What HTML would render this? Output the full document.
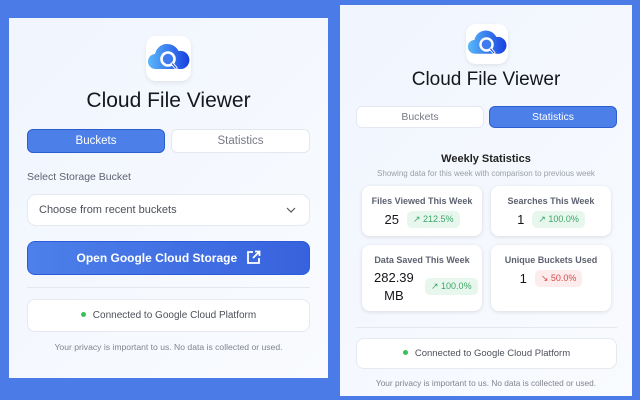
<!DOCTYPE html>
<html><head><style>
*{box-sizing:border-box;margin:0;padding:0}
body{width:640px;height:400px;background:#4a7be6;font-family:"Liberation Sans",sans-serif;position:relative;overflow:hidden}
.panel{position:absolute;background:linear-gradient(135deg,#f0f5fe,#f9fbfe);}
.abs{position:absolute}
.icon{position:absolute;background:#fff;border-radius:10px;box-shadow:0 2px 5px rgba(0,0,0,.08)}
.title{position:absolute;left:0;right:0;text-align:center;color:#15171c}
.tab{position:absolute;border-radius:6px;text-align:center;font-size:11.5px}
.on{background:#4c7fe8;color:#fff;border:1px solid #2b5fd0}
.off{background:#fff;color:#777b85;border:1px solid #e4e8ef}
.box{position:absolute;background:#fff;border:1px solid #e6e9ef;border-radius:8px}
.card{position:absolute;background:#fff;border-radius:8px;box-shadow:0 1px 4px rgba(0,0,0,.12);text-align:center}
.card .h{font-size:9px;font-weight:bold;color:#5d6270;margin-top:10px}
.badge{display:inline-block;font-size:9px;padding:3px 6px;border-radius:5px;vertical-align:middle}
.g{background:#e8f7ee;color:#3ba566}.r{background:#fdecec;color:#d74b4b}
.num{font-size:13px;color:#15171c;vertical-align:middle;margin-right:8px}
.dot{display:inline-block;width:5px;height:5px;border-radius:50%;background:#3cbf5a;margin-right:7px;vertical-align:middle;position:relative;top:-1px}
</style></head><body>
<svg width="0" height="0" style="position:absolute"><defs>
<linearGradient id="cg" x1="0" x2="1"><stop offset="0" stop-color="#5ab8fa"/><stop offset="1" stop-color="#1840e0"/></linearGradient>
<symbol id="logo" viewBox="0 0 45 45"><path d="M10 33a7.5 7.5 0 0 1-1-15 12.5 12.5 0 0 1 23.5-3 9 9 0 0 1 3.5 18z" fill="url(#cg)"/><circle cx="22" cy="23" r="6.5" fill="#3f7bf0" stroke="#fff" stroke-width="2.6"/><path d="M26.5 28l3.5 4" stroke="#fff" stroke-width="3.2" stroke-linecap="round"/><path d="M26.5 28l3.5 4" stroke="#2a55e6" stroke-width="1.3" stroke-linecap="round"/></symbol>
</defs></svg>

<div class="panel" style="left:9px;top:18px;width:319px;height:360px"></div>
<div class="icon" style="left:146px;top:36px;width:45px;height:45px"><svg width="45" height="45"><use href="#logo"/></svg></div>
<div class="title" style="left:9px;width:319px;top:89px;font-size:21px">Cloud File Viewer</div>
<div class="tab on" style="left:27px;top:129px;width:138px;height:24px;line-height:22px">Buckets</div>
<div class="tab off" style="left:171px;top:129px;width:139px;height:24px;line-height:22px">Statistics</div>
<div class="abs" style="left:27px;top:171px;font-size:10.5px;color:#5d6270">Select Storage Bucket</div>
<div class="box" style="left:27px;top:194px;width:283px;height:32px;border-radius:9px"><span class="abs" style="left:11px;top:9px;font-size:11px;color:#4c505a">Choose from recent buckets</span><svg class="abs" style="left:258px;top:12px" width="10" height="7"><path d="M1 1l4 4 4-4" fill="none" stroke="#555" stroke-width="1.2"/></svg></div>
<div class="abs" style="left:27px;top:241px;width:283px;height:34px;border-radius:8px;background:linear-gradient(90deg,#4d80ea,#3762dd);border:1px solid #2d5ad8;color:#fff;font-size:12px;font-weight:bold;text-align:center;line-height:32px">Open Google Cloud Storage <svg style="vertical-align:-3px;margin-left:5px" width="15" height="15" viewBox="0 0 15 15"><path d="M7 2H2v11h11V8M9 1.5h4.5V6M13.5 1.5L7 8" fill="none" stroke="#fff" stroke-width="1.8"/></svg></div>
<div class="abs" style="left:27px;top:287px;width:283px;height:1px;background:#e3e7ee"></div>
<div class="box" style="left:27px;top:299px;width:283px;height:33px;text-align:center;line-height:31px;font-size:10px;color:#4c505a"><span class="dot"></span>Connected to Google Cloud Platform</div>
<div class="abs" style="left:9px;width:319px;top:342px;text-align:center;font-size:8.6px;color:#80848e">Your privacy is important to us. No data is collected or used.</div>

<div class="panel" style="left:340px;top:5px;width:292px;height:391px"></div>
<div class="icon" style="left:466px;top:24px;width:42px;height:40px"><svg width="42" height="40" viewBox="0 1 45 43"><use href="#logo" width="45" height="45"/></svg></div>
<div class="title" style="left:340px;width:292px;top:69px;font-size:19px">Cloud File Viewer</div>
<div class="tab off" style="left:356px;top:106px;width:128px;height:22px;line-height:20px;font-size:10.5px">Buckets</div>
<div class="tab on" style="left:489px;top:106px;width:128px;height:22px;line-height:20px;font-size:10.5px">Statistics</div>
<div class="abs" style="left:340px;width:292px;top:153px;text-align:center;font-size:11px;font-weight:bold;color:#222">Weekly Statistics</div>
<div class="abs" style="left:340px;width:292px;top:169px;text-align:center;font-size:8px;color:#9a9ea8">Showing data for this week with comparison to previous week</div>
<div class="card" style="left:362px;top:186px;width:120px;height:50px"><div class="h">Files Viewed This Week</div><div style="margin-top:5px"><span class="num">25</span><span class="badge g">↗ 212.5%</span></div></div>
<div class="card" style="left:491px;top:186px;width:120px;height:50px"><div class="h">Searches This Week</div><div style="margin-top:5px"><span class="num">1</span><span class="badge g">↗ 100.0%</span></div></div>
<div class="card" style="left:362px;top:245px;width:120px;height:66px"><div class="h">Data Saved This Week</div><div class="abs" style="left:12px;top:24px;font-size:13px;color:#15171c;line-height:18px;text-align:center">282.39<br>MB</div><span class="badge g abs" style="left:63px;top:33px">↗ 100.0%</span></div>
<div class="card" style="left:491px;top:245px;width:120px;height:66px"><div class="h">Unique Buckets Used</div><div style="margin-top:5px"><span class="num">1</span><span class="badge r">↘ 50.0%</span></div></div>
<div class="abs" style="left:356px;top:327px;width:261px;height:1px;background:#e3e7ee"></div>
<div class="box" style="left:356px;top:338px;width:261px;height:31px;text-align:center;line-height:29px;font-size:9.5px;color:#4c505a"><span class="dot"></span>Connected to Google Cloud Platform</div>
<div class="abs" style="left:340px;width:292px;top:378px;text-align:center;font-size:8.3px;color:#80848e">Your privacy is important to us. No data is collected or used.</div>
</body></html>
